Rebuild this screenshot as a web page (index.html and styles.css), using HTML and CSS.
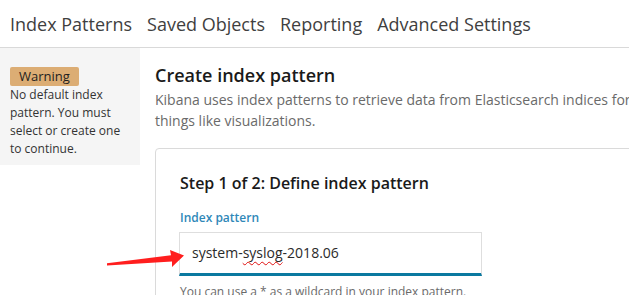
FILE: index.html
```html
<!DOCTYPE html>
<html lang="en">
<head>
<meta charset="utf-8">
<title>Index Patterns</title>
<link rel="stylesheet" href="styles.css">
</head>
<body>
<div class="page">
  <nav class="tabs">
    <span class="tab">Index Patterns</span>
    <span class="tab">Saved Objects</span>
    <span class="tab">Reporting</span>
    <span class="tab">Advanced Settings</span>
  </nav>
  <div class="body">
    <aside class="sidebar">
      <span class="badge">Warning</span>
      <p class="warn-text">No default index pattern. You must select or create one to continue.</p>
    </aside>
    <main class="main">
      <h1 class="title">Create index pattern</h1>
      <p class="desc">Kibana uses index patterns to retrieve data from Elasticsearch indices for things like visualizations.</p>
      <section class="card">
        <h2 class="step">Step 1 of 2: Define index pattern</h2>
        <label class="label">Index pattern</label>
        <div class="input">system-<span class="spell">syslog</span>-2018.06</div>
        <p class="help">You can use a * as a wildcard in your index pattern.</p>
      </section>
    </main>
  </div>
  <svg class="arrow" width="629" height="295" viewBox="0 0 629 295" aria-hidden="true">
    <polygon points="107,263.2 171,255.3 170,250 184,255.5 172,267 172,261.5 107,265.6" fill="#ff1e1e"/>
  </svg>
</div>
</body>
</html>
```

FILE: styles.css
```css
html, body {
  margin: 0;
  padding: 0;
  overflow: hidden;
  background: #fff;
}
body {
  font-family: "Open Sans", "Noto Sans", sans-serif;
  color: #333;
}
.page {
  position: relative;
  width: 629px;
  height: 295px;
  overflow: hidden;
}
.tabs {
  display: flex;
  gap: 15px;
  padding: 11px 10px 9px;
  border-bottom: 1px solid #d9d9d9;
  font-size: 18px;
  line-height: 27px;
  color: #3f3f3f;
  white-space: nowrap;
}
.body {
  display: flex;
  align-items: flex-start;
}
.sidebar {
  flex: 0 0 140px;
  box-sizing: border-box;
  width: 140px;
  background: #f5f5f5;
  padding: 16px 10px 7px;
}
.badge {
  display: inline-block;
  background: #dcad74;
  color: #1e1e1e;
  font-size: 13px;
  line-height: 19px;
  padding: 0 9px;
  border-radius: 2px;
}
.warn-text {
  margin: 0;
  font-size: 12px;
  line-height: 18px;
  color: #333;
}
.main {
  flex: 0 0 auto;
  width: 520px;
  padding: 14px 0 0 15px;
}
.title {
  margin: 0;
  font-size: 18px;
  line-height: 27px;
  font-weight: 600;
  color: #1a1a1a;
}
.desc {
  margin: 0 0 17px;
  width: 500px;
  font-size: 14px;
  line-height: 21px;
  color: #6a6a6a;
}
.card {
  border: 1px solid #dadada;
  border-radius: 4px 0 0 0;
  padding: 24px 24px 0;
  height: 200px;
}
.step {
  margin: 0 0 16px;
  font-size: 16px;
  line-height: 20px;
  font-weight: 600;
  color: #1a1a1a;
}
.label {
  display: block;
  font-size: 12px;
  line-height: 18px;
  font-weight: 600;
  color: #2f88b8;
  margin-bottom: 5px;
}
.input {
  box-sizing: border-box;
  width: 303px;
  height: 44px;
  border: 1px solid #dedede;
  border-bottom: 3px solid #0b79a0;
  padding: 0 12px;
  font-size: 14px;
  line-height: 40px;
  color: #2a2a2a;
  margin-left: -1px;
}
.spell {
  text-decoration: underline wavy #e01010 1px;
  text-underline-offset: 3px;
}
.help {
  margin: 7px 0 0;
  font-size: 12px;
  line-height: 18px;
  color: #6a6a6a;
}
.arrow {
  position: absolute;
  left: 0;
  top: 0;
  pointer-events: none;
}
```
